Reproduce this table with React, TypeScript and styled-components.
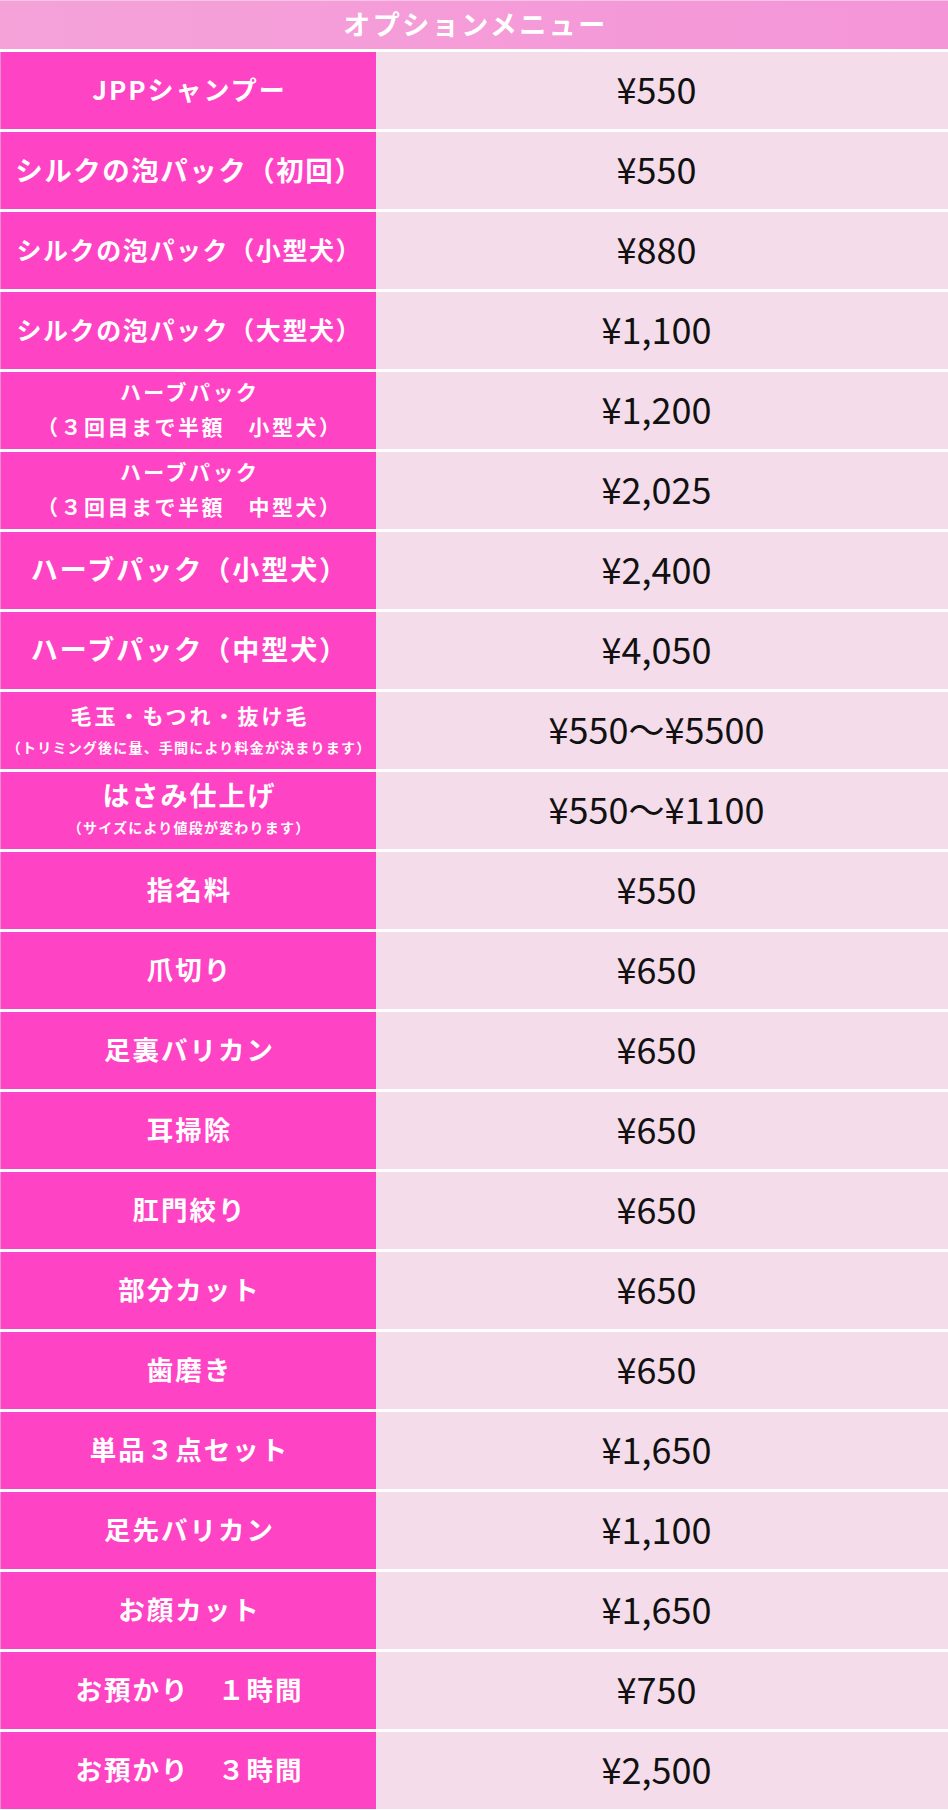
import React from "react";
import styled, { createGlobalStyle } from "styled-components";

interface MenuItem {
  name: string;
  note?: string;
  price: string;
  size?: number;
  spacing?: number;
  small?: boolean;
}

const items: MenuItem[] = [
  { name: "JPPシャンプー", price: "¥550", size: 26, spacing: 2 },
  { name: "シルクの泡パック（初回）", price: "¥550", size: 27.5, spacing: 1.5 },
  { name: "シルクの泡パック（小型犬）", price: "¥880", size: 25, spacing: 1.6 },
  { name: "シルクの泡パック（大型犬）", price: "¥1,100", size: 25, spacing: 1.6 },
  { name: "ハーブパック", note: "（３回目まで半額　小型犬）", price: "¥1,200" },
  { name: "ハーブパック", note: "（３回目まで半額　中型犬）", price: "¥2,025" },
  { name: "ハーブパック（小型犬）", price: "¥2,400", size: 27, spacing: 2 },
  { name: "ハーブパック（中型犬）", price: "¥4,050", size: 27, spacing: 2 },
  {
    name: "毛玉・もつれ・抜け毛",
    note: "（トリミング後に量、手間により料金が決まります）",
    price: "¥550～¥5500",
    size: 21,
    spacing: 3,
    small: true,
  },
  {
    name: "はさみ仕上げ",
    note: "（サイズにより値段が変わります）",
    price: "¥550～¥1100",
    size: 27,
    spacing: 2,
    small: true,
  },
  { name: "指名料", price: "¥550" },
  { name: "爪切り", price: "¥650" },
  { name: "足裏バリカン", price: "¥650" },
  { name: "耳掃除", price: "¥650" },
  { name: "肛門絞り", price: "¥650" },
  { name: "部分カット", price: "¥650" },
  { name: "歯磨き", price: "¥650" },
  { name: "単品３点セット", price: "¥1,650" },
  { name: "足先バリカン", price: "¥1,100" },
  { name: "お顔カット", price: "¥1,650" },
  { name: "お預かり　１時間", price: "¥750" },
  { name: "お預かり　３時間", price: "¥2,500" },
];

const App: React.FC = () => {
  return (
    <>
      <GlobalStyle />
      <MenuTable>
        <Header>オプションメニュー</Header>
        {items.map((item, i) => (
          <Row key={i}>
            <NameCell>
              {item.note && !item.small ? (
                <>
                  <TwoLineName>{item.name}</TwoLineName>
                  <TwoLineName>{item.note}</TwoLineName>
                </>
              ) : (
                <>
                  <Name
                    $size={item.size ?? 26.5}
                    $spacing={item.spacing ?? 2}
                    $lh={item.note ? 36 : 40}
                  >
                    {item.name}
                  </Name>
                  {item.note && <Note>{item.note}</Note>}
                </>
              )}
            </NameCell>
            <PriceCell>{item.price}</PriceCell>
          </Row>
        ))}
      </MenuTable>
    </>
  );
};

const GlobalStyle = createGlobalStyle`
  html, body {
    margin: 0;
    padding: 0;
    background: #ffffff;
  }
  body {
    font-family: "Noto Sans CJK JP", "Noto Sans", sans-serif;
  }
`;

const MenuTable = styled.div`
  width: 948px;
  display: flex;
  flex-direction: column;
`;

const Header = styled.div`
  height: 49px;
  border-top: 1px solid #f7c4e6;
  background: linear-gradient(90deg, #f5a2d9 0%, #f495d8 100%);
  color: #ffffff;
  font-size: 27px;
  font-weight: 700;
  letter-spacing: 2.5px;
  display: flex;
  align-items: center;
  justify-content: center;
  padding-left: 3px;
  padding-bottom: 3px;
  box-sizing: border-box;
`;

const Row = styled.div`
  display: grid;
  grid-template-columns: 376px 1fr;
  height: 77px;
  border-top: 3px solid #ffffff;
`;

const NameCell = styled.div`
  background: #ff43c5;
  border-left: 1px solid #e58fcf;
  display: flex;
  flex-direction: column;
  align-items: center;
  justify-content: center;
  padding-bottom: 4px;
  color: #ffffff;
  font-weight: 700;
  white-space: nowrap;
`;

const Name = styled.div<{ $size: number; $spacing: number; $lh: number }>`
  font-size: ${(props) => props.$size}px;
  letter-spacing: ${(props) => props.$spacing}px;
  line-height: ${(props) => props.$lh}px;
  padding-left: ${(props) => props.$spacing}px;
`;

const TwoLineName = styled.div`
  font-size: 21px;
  letter-spacing: 2.5px;
  line-height: 35px;
  padding-left: 2.5px;
`;

const Note = styled.div`
  font-size: 14px;
  letter-spacing: 1.2px;
  line-height: 28px;
  padding-left: 1.2px;
`;

const PriceCell = styled.div`
  background: #f5dcea;
  border-left: 1px solid #ebe3e8;
  display: flex;
  align-items: center;
  justify-content: center;
  padding-right: 12px;
  padding-bottom: 5px;
  color: #111111;
  font-size: 36px;
  font-weight: 400;
  white-space: nowrap;
`;

export default App;
